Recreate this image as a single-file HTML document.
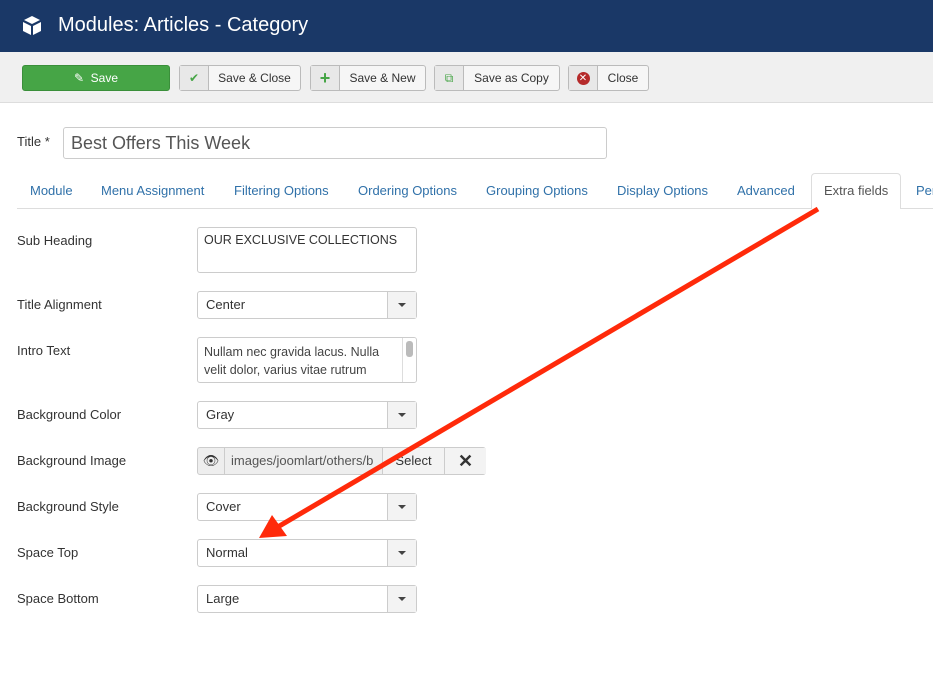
<!DOCTYPE html><html><head><style>
*{box-sizing:border-box}body{margin:0;width:933px;height:684px;overflow:hidden;background:#fff;font-family:"Liberation Sans",sans-serif;font-size:13px;color:#333;position:relative}
.a{position:absolute}
.hd{left:0;top:0;width:933px;height:52px;background:#1a3867;color:#fff;font-size:20px}
.tb{left:0;top:52px;width:933px;height:51px;background:#f0f0f0;border-bottom:1px solid #ddd}
.btn{position:absolute;top:65px;height:26px;border:1px solid #bbb;border-radius:3px;background:#f6f6f6;font-size:12px;display:flex;align-items:center}
.btn .ic{width:29px;height:100%;border-right:1px solid #bbb;background:#e8e8e8;display:flex;align-items:center;justify-content:center}
.btn .t{flex:1;text-align:center}
.lbl{left:17px;font-size:13px}
.inp{position:absolute;left:197px;width:220px;border:1px solid #ccc;border-radius:3px;background:#fff;padding:0 8px;font-size:13px}
.sel{height:28px;line-height:26px}
.sel:after{content:"";position:absolute;right:0;top:0;width:28px;height:26px;border-left:1px solid #ccc;background:#f3f3f3}
.sel:before{content:"";position:absolute;right:10px;top:11px;border:4px solid transparent;border-top:4px solid #444;z-index:2}
.tab{position:absolute;top:183px;color:#3071a9;font-size:13px}
</style></head><body>
<div class="a hd"><svg class="a" style="left:23px;top:16px" width="18" height="19" viewBox="0 0 18 19"><path d="M9 0L17 4 9 8 1 4Z" fill="#fff"/><path d="M0 6L8 10V19L0 15Z M18 6L10 10V19L18 15Z" fill="#fff"/></svg><span class="a" style="left:58px;top:14px">Modules: Articles - Category</span></div>
<div class="a tb"></div>
<div class="btn" style="left:22px;width:148px;background:#46a546;border-color:#3a8f3a;color:#fff;justify-content:center">✎&nbsp; Save</div>
<div class="btn" style="left:179px;width:122px"><div class="ic" style="color:#46a546">✔</div><div class="t">Save &amp; Close</div></div>
<div class="btn" style="left:310px;width:116px"><div class="ic" style="color:#46a546;font-size:18px;font-weight:bold">+</div><div class="t">Save &amp; New</div></div>
<div class="btn" style="left:434px;width:126px"><div class="ic" style="color:#46a546">⧉</div><div class="t">Save as Copy</div></div>
<div class="btn" style="left:568px;width:81px"><div class="ic"><span style="display:inline-block;width:13px;height:13px;border-radius:50%;background:#b52a2a;color:#fff;font-size:10px;line-height:13px;text-align:center">✕</span></div><div class="t">Close</div></div>
<div class="a lbl" style="top:134px">Title *</div>
<div class="a" style="left:63px;top:127px;width:544px;height:32px;border:1px solid #ccc;border-radius:3px;font-size:18px;padding:5px 7px;color:#555">Best Offers This Week</div>
<div class="a" style="left:17px;top:208px;width:916px;height:1px;background:#ddd"></div>
<div class="a" style="left:811px;top:173px;width:90px;height:36px;border:1px solid #ddd;border-bottom:none;border-radius:4px 4px 0 0;background:#fff"></div>
<span class="tab" style="left:30px">Module</span><span class="tab" style="left:101px">Menu Assignment</span><span class="tab" style="left:234px">Filtering Options</span><span class="tab" style="left:358px">Ordering Options</span><span class="tab" style="left:486px">Grouping Options</span><span class="tab" style="left:617px">Display Options</span><span class="tab" style="left:737px">Advanced</span><span class="tab" style="left:824px;color:#555">Extra fields</span><span class="tab" style="left:916px">Per</span>
<div class="a lbl" style="top:233px">Sub Heading</div>
<div class="inp" style="top:227px;height:46px;padding:5px 6px;font-size:12.5px">OUR EXCLUSIVE COLLECTIONS</div>
<div class="a lbl" style="top:297px">Title Alignment</div>
<div class="inp sel" style="top:291px">Center</div>
<div class="a lbl" style="top:343px">Intro Text</div>
<div class="inp" style="top:337px;height:46px;padding:5px 20px 5px 6px;line-height:18px;overflow:hidden;color:#444;font-size:12.5px">Nullam nec gravida lacus. Nulla velit dolor, varius vitae rutrum<div class="a" style="right:0;top:0;width:14px;height:44px;border-left:1px solid #ddd;background:#fff"><div style="margin:3px 3px;width:7px;height:16px;background:#bbb;border-radius:3px"></div></div></div>
<div class="a lbl" style="top:407px">Background Color</div>
<div class="inp sel" style="top:401px">Gray</div>
<div class="a lbl" style="top:453px">Background Image</div>
<div class="a" style="left:197px;top:447px;width:289px;height:28px;border:1px solid #ccc;border-radius:3px;background:#eee;font-size:13px;line-height:26px">
<span class="a" style="left:0;width:27px;text-align:center;border-right:1px solid #ccc;height:26px">👁</span>
<span class="a" style="left:33px;color:#555;width:150px;overflow:hidden;white-space:nowrap">images/joomlart/others/b</span>
<span class="a" style="left:184px;width:62px;border-left:1px solid #ccc;text-align:center;background:#f3f3f3">Select</span>
<span class="a" style="left:246px;width:42px;border-left:1px solid #ccc;text-align:center;background:#f3f3f3;font-size:18px;font-weight:bold">✕</span></div>
<div class="a lbl" style="top:499px">Background Style</div>
<div class="inp sel" style="top:493px">Cover</div>
<div class="a lbl" style="top:545px">Space Top</div>
<div class="inp sel" style="top:539px">Normal</div>
<div class="a lbl" style="top:591px">Space Bottom</div>
<div class="inp sel" style="top:585px">Large</div>
<svg class="a" style="left:0;top:0" width="933" height="684"><line x1="818" y1="209" x2="276" y2="528" stroke="#ff2a0a" stroke-width="5"/><path d="M259 538L272 515L287 536Z" fill="#ff2a0a"/></svg>
</body></html>
